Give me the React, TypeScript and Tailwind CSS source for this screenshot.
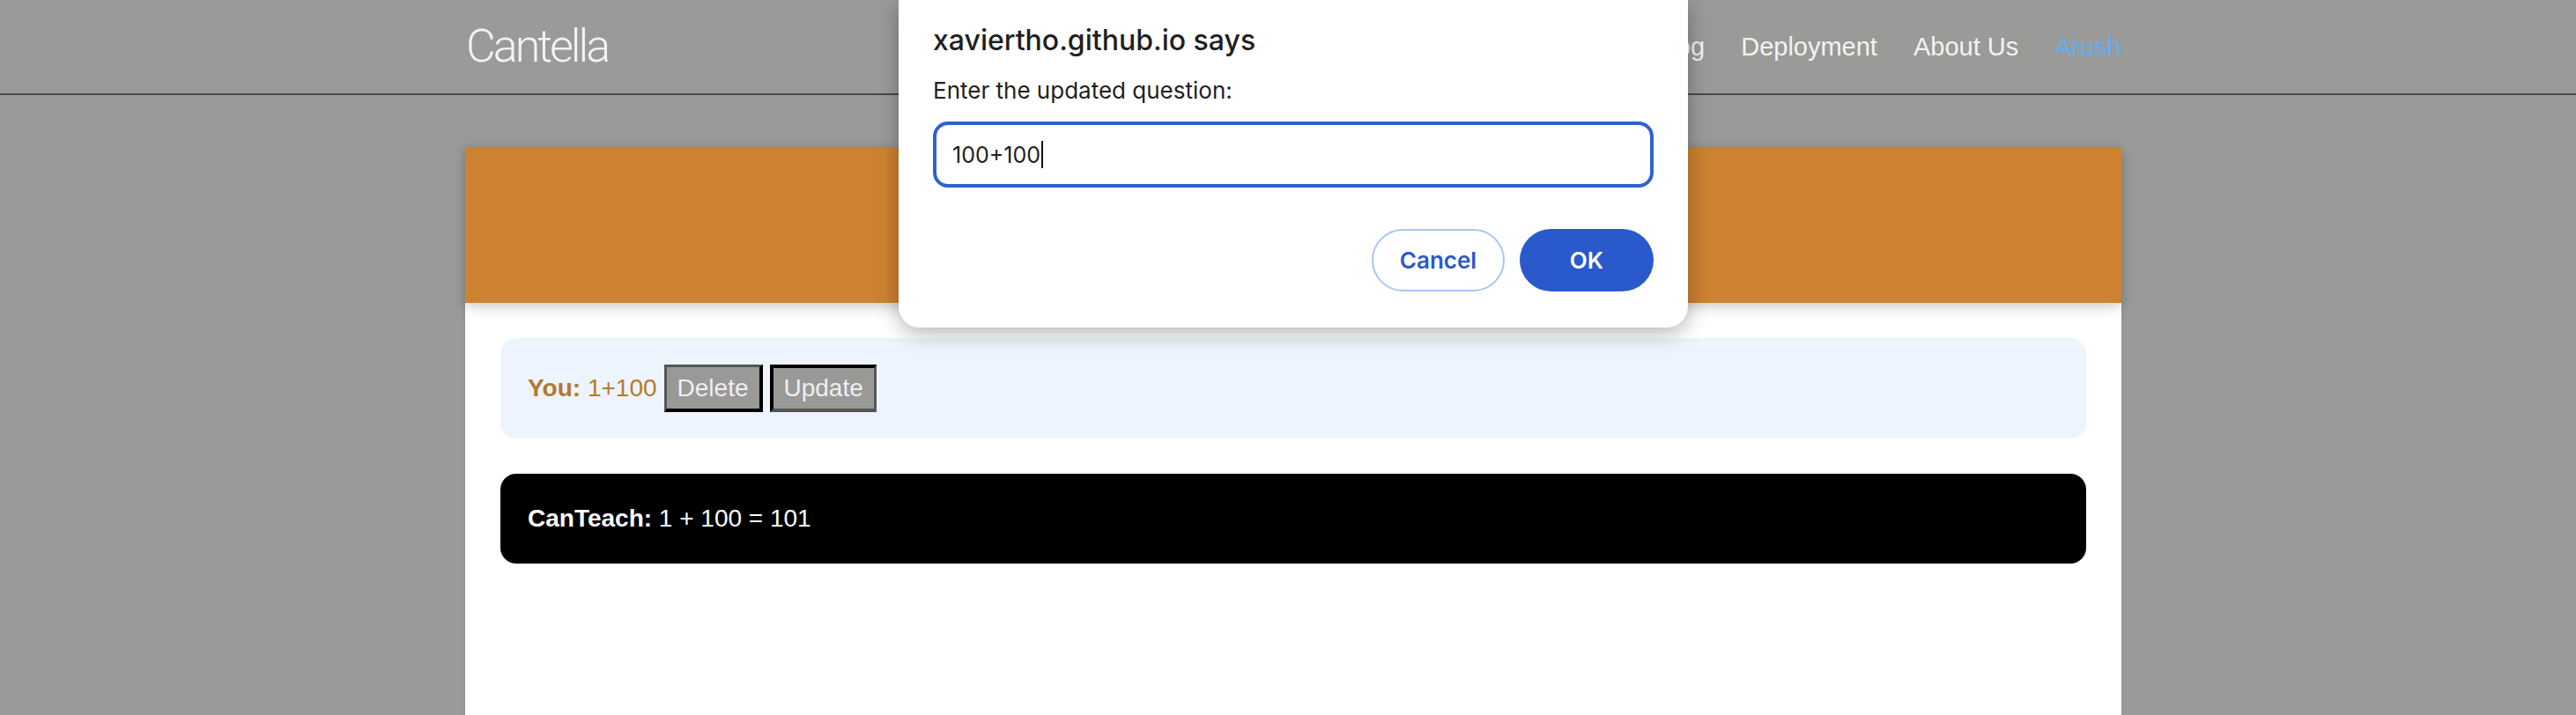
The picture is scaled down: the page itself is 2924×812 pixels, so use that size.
import React from "react";

export default function App() {
  return (
    <div
      className="relative h-[812px] w-full overflow-hidden bg-[#9a9a98]"
      style={{ fontFamily: '"Liberation Sans", Arial, sans-serif' }}
    >
      {/* Header */}
      <header className="flex h-[108px] items-center justify-between border-b-2 border-[#4a4a4a] pl-[529px] pr-[516px]">
        <div
          className="text-[52px] font-light leading-[60px] tracking-[-3px] text-[#f3f3f3]"
          style={{ fontFamily: "Roboto, sans-serif" }}
        >
          Cantella
        </div>
        <nav className="flex items-center gap-[41px] text-[29px] leading-[34px] text-[#f3f3f3]">
          <span>Chat</span>
          <span>Blog</span>
          <span>Deployment</span>
          <span>About Us</span>
          <span className="text-[#5eaef5]">Arush</span>
        </nav>
      </header>

      {/* Card */}
      <main className="ml-[528px] mt-[60px] flex h-[700px] w-[1880px] flex-col bg-white shadow-[0_0_6px_rgba(0,0,0,0.08)]">
        <div className="relative z-10 h-[176px] bg-[#cc8230] shadow-[0_4px_14px_rgba(0,0,0,0.22)]" />
        <div className="flex flex-col gap-[40px] px-[40px] pt-[40px]">
          <div className="flex h-[114px] items-center rounded-[18px] bg-[#edf4fe] pl-[31px] text-[28px] leading-[32px] text-[#b5792c]">
            <span>
              <b>You:</b> 1+100
            </span>
            <button className="ml-[8px] h-[54px] border-b-[4px] border-l-[3px] border-r-[4px] border-t-[3px] border-b-black border-l-[#555] border-r-black border-t-[#555] bg-[#999998] px-[12px] text-[28px] leading-[32px] text-[#efefef]">
              Delete
            </button>
            <button className="ml-[8px] h-[54px] border-b-[4px] border-l-[4px] border-r-[3px] border-t-[4px] border-b-[#555] border-l-black border-r-[#555] border-t-black bg-[#999998] px-[12px] text-[28px] leading-[32px] text-[#efefef]">
              Update
            </button>
          </div>
          <div className="flex h-[102px] items-center rounded-[18px] bg-black pl-[31px] text-[28px] leading-[32px] text-white">
            <span>
              <b>CanTeach:</b> 1 + 100 = 101
            </span>
          </div>
        </div>
      </main>

      {/* Prompt dialog */}
      <div
        className="absolute left-[1020px] top-0 z-20 flex h-[372px] w-[896px] flex-col rounded-b-[24px] bg-white px-[39px] pt-[27px] shadow-[0_6px_24px_rgba(0,0,0,0.3)]"
        style={{ fontFamily: "Inter, Roboto, sans-serif" }}
      >
        <div className="text-[32px] font-medium leading-[38px] text-[#1f1f1f]">
          xaviertho.github.io says
        </div>
        <div className="mt-[23px] text-[26px] leading-[30px] text-[#1f1f1f]">
          Enter the updated question:
        </div>
        <div className="mt-[20px] flex h-[75px] items-center rounded-[17px] border-[4px] border-[#2f62cf] pl-[18px] text-[25px] leading-[30px] text-[#1f1f1f]">
          <span>100+100</span>
          <span className="ml-[1px] h-[31px] w-[2px] bg-[#111]" />
        </div>
        <div className="mt-[47px] flex justify-end gap-[17px]">
          <button className="flex h-[71px] w-[151px] items-center justify-center rounded-full border-2 border-[#a9c5f5] text-[26px] font-semibold text-[#2a59c9]">
            Cancel
          </button>
          <button className="flex h-[71px] w-[152px] items-center justify-center rounded-full bg-[#2a59cc] text-[26px] font-semibold text-white">
            OK
          </button>
        </div>
      </div>
    </div>
  );
}
